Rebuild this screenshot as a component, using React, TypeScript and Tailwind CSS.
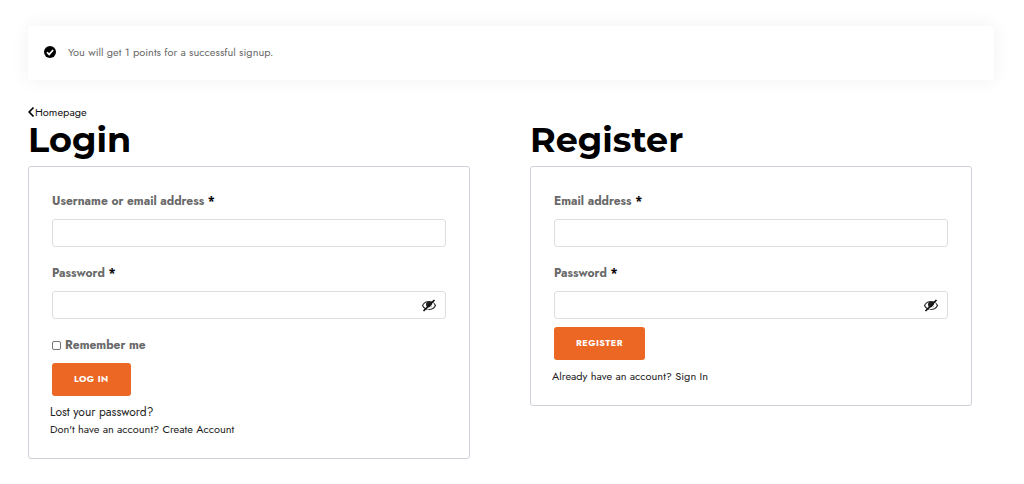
import { useState } from "react";
import type { ReactNode } from "react";

const CheckIcon = () => (
  <svg viewBox="0 0 24 24" className="size-3 shrink-0" aria-hidden="true">
    <circle cx="12" cy="12" r="12" fill="#000" />
    <path d="M6 12.5l4.3 4.3L18.3 8" fill="none" stroke="#fff" strokeWidth="3.4" />
  </svg>
);

const ChevronIcon = () => (
  <svg viewBox="0 0 7 12" className="h-3 w-[7px] shrink-0" aria-hidden="true">
    <path d="M5.5 1.5L1.2 6l4.3 4.5" fill="none" stroke="#000" strokeWidth="1.7" />
  </svg>
);

const EyeSlashIcon = () => (
  <svg viewBox="0 0 32 26" className="h-[13px] w-4" aria-hidden="true">
    <path
      d="M3 13C6 7 11 5 16 5s10 2 13 8c-3 6-8 8-13 8S6 19 3 13z"
      fill="none"
      stroke="#333"
      strokeWidth="2.4"
    />
    <circle cx="16" cy="11" r="6" fill="#222" />
    <path d="M10 25L29 4" stroke="#fff" strokeWidth="1.6" />
    <path d="M5 24L27 2" stroke="#111" strokeWidth="3.4" />
  </svg>
);

type FieldProps = {
  id: string;
  label: string;
  password?: boolean;
};

const Field = ({ id, label, password = false }: FieldProps) => {
  const [visible, setVisible] = useState(false);

  return (
    <div>
      <label htmlFor={id} className="block text-xs leading-5 font-bold text-[#696969]">
        {label} <span className="text-black">*</span>
      </label>
      <div className="mt-2 flex h-7 items-center rounded-[3px] border border-[#dedee0] pr-2">
        <input
          id={id}
          type={password && !visible ? "password" : "text"}
          className="h-full min-w-0 flex-1 px-2 text-xs outline-none"
        />
        {password && (
          <button
            type="button"
            aria-label="Show password"
            className="cursor-pointer"
            onClick={() => setVisible(!visible)}
          >
            <EyeSlashIcon />
          </button>
        )}
      </div>
    </div>
  );
};

const SubmitButton = ({ children }: { children: ReactNode }) => (
  <button
    type="submit"
    className="block h-[33px] cursor-pointer rounded-[3px] bg-[#ec6724] px-[22px] pb-0.5 text-[9px] font-bold tracking-wider text-white uppercase"
  >
    {children}
  </button>
);

type PanelProps = {
  title: string;
  form: ReactNode;
  links: ReactNode;
};

const Panel = ({ title, form, links }: PanelProps) => (
  <section>
    <h2 className="mb-1.5 font-['Montserrat','Inter',sans-serif] text-[35px] leading-10 font-bold text-black">
      {title}
    </h2>
    <div className="rounded-[3px] border border-[#d3ced9] px-[21px] pt-6 pb-5">
      <form className="px-0.5" onSubmit={(e) => e.preventDefault()}>
        {form}
      </form>
      <div className="mt-2 text-[11px] leading-[17px] text-[#222]">{links}</div>
    </div>
  </section>
);

const App = () => {
  return (
    <main className="bg-white pt-[26px] pr-[30px] pb-6 pl-7 font-['Jost','Lato',sans-serif]">
      <div className="flex h-[54px] items-center gap-3 rounded-[3px] bg-white px-4 pb-0.5 text-[11px] text-[#696969] shadow-[0_0_20px_rgba(0,0,0,0.06)]">
        <CheckIcon />
        <p>You will get 1 points for a successful signup.</p>
      </div>

      <a href="#" className="mt-6 flex w-fit items-center text-[11px] leading-4 text-[#111]">
        <ChevronIcon />
        Homepage
      </a>

      <div className="grid grid-cols-2 items-start gap-[60px] pr-[22px]">
        <Panel
          title="Login"
          form={
            <>
              <div className="grid gap-4">
                <Field id="username" label="Username or email address" />
                <Field id="login-password" label="Password" password />
                <label className="flex w-fit items-center gap-1 text-xs leading-5 font-bold text-[#696969]">
                  <input
                    type="checkbox"
                    className="size-[9px] appearance-none rounded-[2px] border border-[#767676] checked:bg-[#ec6724]"
                  />
                  Remember me
                </label>
              </div>
              <div className="mt-2">
                <SubmitButton>Log in</SubmitButton>
              </div>
            </>
          }
          links={
            <>
              <p className="text-xs leading-[17px]">
                <a href="#">Lost your password?</a>
              </p>
              <p>
                Don't have an account? <a href="#">Create Account</a>
              </p>
            </>
          }
        />
        <Panel
          title="Register"
          form={
            <>
              <div className="grid gap-4">
                <Field id="email" label="Email address" />
                <Field id="register-password" label="Password" password />
              </div>
              <div className="mt-2">
                <SubmitButton>Register</SubmitButton>
              </div>
            </>
          }
          links={
            <p>
              Already have an account? <a href="#">Sign In</a>
            </p>
          }
        />
      </div>
    </main>
  );
};

export default App;
